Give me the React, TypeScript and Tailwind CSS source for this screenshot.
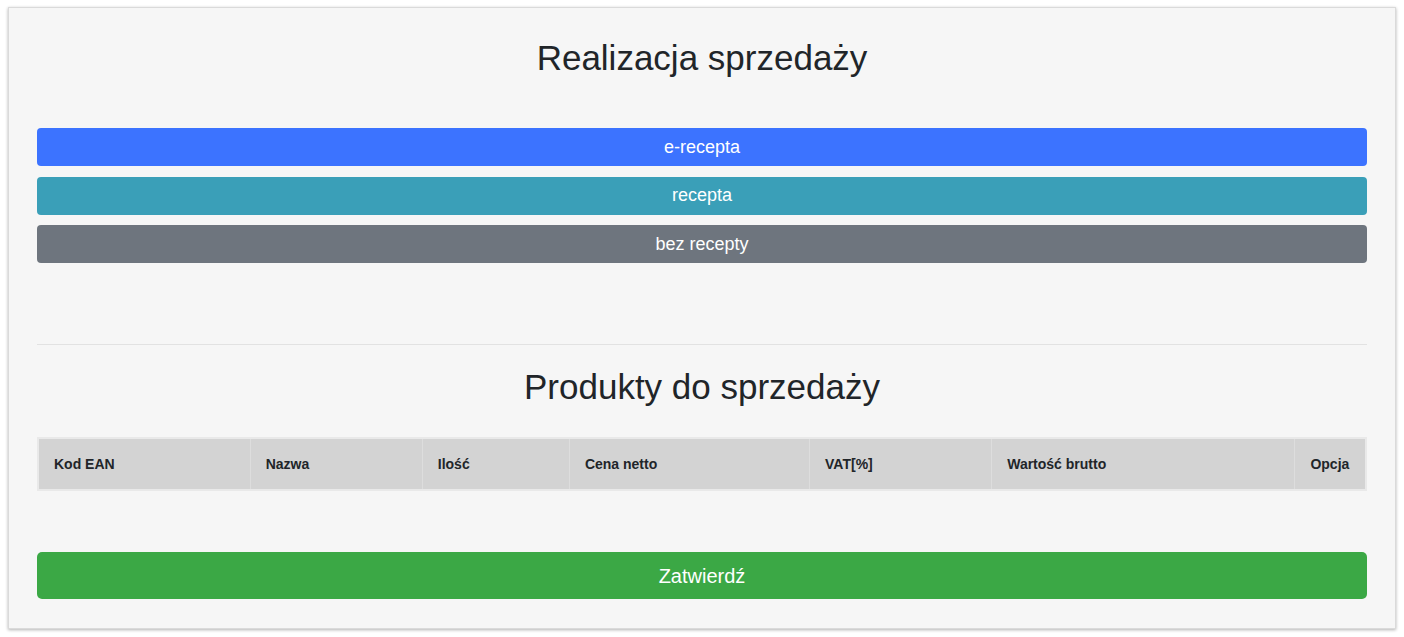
import React from 'react';

const columns = [
  { label: 'Kod EAN', width: 'w-[212px]' },
  { label: 'Nazwa', width: 'w-[172px]' },
  { label: 'Ilość', width: 'w-[147px]' },
  { label: 'Cena netto', width: 'w-[240px]' },
  { label: 'VAT[%]', width: 'w-[182px]' },
  { label: 'Wartość brutto', width: 'w-[303px]' },
  { label: 'Opcja', width: 'w-[71px]' },
];

const saleTypes = [
  { label: 'e-recepta', color: 'bg-[#3c73ff]' },
  { label: 'recepta', color: 'bg-[#3a9fb8]' },
  { label: 'bez recepty', color: 'bg-[#6e757e]' },
];

export default function App() {
  return (
    <div className="min-h-screen bg-white px-2 pt-[7px] font-['Liberation_Sans',Arial,sans-serif] text-[#212529]">
      <div className="border border-[#dadada] bg-[#f6f6f6] px-[28px] pt-[28px] pb-[29px] shadow-[0_1px_3px_rgba(0,0,0,0.3)]">
        <h1 className="text-center text-[35px] leading-[43px]">Realizacja sprzedaży</h1>

        <div className="mt-[49px] flex flex-col gap-[10.5px]">
          {saleTypes.map((t) => (
            <button
              key={t.label}
              className={`h-[38px] w-full rounded-[4px] ${t.color} text-[18px] text-white`}
            >
              {t.label}
            </button>
          ))}
        </div>

        <hr className="mt-[81px] border-t border-[#e2e2e2]" />

        <h2 className="mt-[20px] text-center text-[35px] leading-[43px]">Produkty do sprzedaży</h2>

        <table className="mt-[29px] w-full table-fixed border-collapse border-2 border-[#e9e9e9]">
          <thead>
            <tr className="h-[52px] bg-[#d3d3d3]">
              {columns.map((c, i) => (
                <th
                  key={c.label}
                  className={`${c.width} ${i > 0 ? 'border-l border-[#dddddd]' : ''} px-[15px] text-left text-[14px] font-bold`}
                >
                  {c.label}
                </th>
              ))}
            </tr>
          </thead>
        </table>

        <button className="mt-[61px] h-[47px] w-full rounded-[5px] bg-[#3ba845] text-[20px] text-white">
          Zatwierdź
        </button>
      </div>
    </div>
  );
}
